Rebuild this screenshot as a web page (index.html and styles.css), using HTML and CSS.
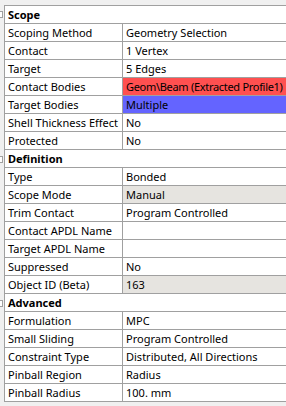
FILE: index.html
```html
<!DOCTYPE html>
<html lang="en">
<head>
    <meta charset="UTF-8">
    <title>Details</title>
    <link rel="stylesheet" href="styles.css">
</head>
<body>
    <div class="grid">
        <div class="row group first">
            <div class="gut"><span class="box"></span></div>
            <div class="cells"><div class="head">Scope</div></div>
        </div>
        <div class="row"><div class="gut"></div><div class="cells"><div class="name">Scoping Method</div><div class="val">Geometry Selection</div></div></div>
        <div class="row"><div class="gut"></div><div class="cells"><div class="name">Contact</div><div class="val">1 Vertex</div></div></div>
        <div class="row"><div class="gut"></div><div class="cells"><div class="name">Target</div><div class="val">5 Edges</div></div></div>
        <div class="row"><div class="gut"></div><div class="cells"><div class="name">Contact Bodies</div><div class="val red">Geom\Beam (Extracted Profile1)</div></div></div>
        <div class="row"><div class="gut"></div><div class="cells"><div class="name">Target Bodies</div><div class="val blue">Multiple</div></div></div>
        <div class="row"><div class="gut"></div><div class="cells"><div class="name">Shell Thickness Effect</div><div class="val">No</div></div></div>
        <div class="row"><div class="gut"></div><div class="cells"><div class="name">Protected</div><div class="val">No</div></div></div>

        <div class="row group">
            <div class="gut"><span class="box"></span></div>
            <div class="cells"><div class="head">Definition</div></div>
        </div>
        <div class="row"><div class="gut"></div><div class="cells"><div class="name">Type</div><div class="val">Bonded</div></div></div>
        <div class="row"><div class="gut"></div><div class="cells"><div class="name">Scope Mode</div><div class="val ro">Manual</div></div></div>
        <div class="row"><div class="gut"></div><div class="cells"><div class="name">Trim Contact</div><div class="val">Program Controlled</div></div></div>
        <div class="row"><div class="gut"></div><div class="cells"><div class="name">Contact APDL Name</div><div class="val"></div></div></div>
        <div class="row"><div class="gut"></div><div class="cells"><div class="name">Target APDL Name</div><div class="val"></div></div></div>
        <div class="row"><div class="gut"></div><div class="cells"><div class="name">Suppressed</div><div class="val">No</div></div></div>
        <div class="row"><div class="gut"></div><div class="cells"><div class="name">Object ID (Beta)</div><div class="val ro">163</div></div></div>

        <div class="row group">
            <div class="gut"><span class="box"></span></div>
            <div class="cells"><div class="head">Advanced</div></div>
        </div>
        <div class="row"><div class="gut"></div><div class="cells"><div class="name">Formulation</div><div class="val">MPC</div></div></div>
        <div class="row"><div class="gut"></div><div class="cells"><div class="name">Small Sliding</div><div class="val">Program Controlled</div></div></div>
        <div class="row"><div class="gut"></div><div class="cells"><div class="name">Constraint Type</div><div class="val">Distributed, All Directions</div></div></div>
        <div class="row"><div class="gut"></div><div class="cells"><div class="name">Pinball Region</div><div class="val">Radius</div></div></div>
        <div class="row"><div class="gut"></div><div class="cells"><div class="name">Pinball Radius</div><div class="val">100. mm</div></div></div>
    </div>
</body>
</html>
```

FILE: styles.css
```css
body {
    margin: 0;
    padding-top: 5px;
    background-color: #f0f0f0;
    font-family: 'Noto Sans', sans-serif;
    font-size: 11px;
    color: #000;
    overflow: hidden;
}

.grid {
    display: flex;
    flex-direction: column;
}

.row {
    display: flex;
    height: 18px;
}

.row.first {
    height: 19px;
}

.gut {
    width: 4px;
    flex: none;
    display: flex;
    justify-content: flex-end;
    align-items: center;
    overflow: hidden;
}

.box {
    flex: none;
    width: 7px;
    height: 7px;
    margin-right: 1px;
    border: 1px solid #a0a0a0;
    background: #fff;
    box-sizing: border-box;
}

.cells {
    flex: 1;
    min-width: 0;
    display: flex;
    background: #fff;
    border-left: 1px solid #a0a0a0;
    border-bottom: 1px solid #a0a0a0;
}

.first .cells {
    border-top: 1px solid #a0a0a0;
}

.head {
    font-weight: 700;
    padding-left: 3px;
    line-height: 17px;
}

.name {
    width: 114px;
    flex: none;
    padding-left: 3px;
    border-right: 1px solid #a0a0a0;
    line-height: 17px;
    white-space: nowrap;
    overflow: hidden;
}

.val {
    flex: 1;
    min-width: 0;
    padding-left: 3px;
    line-height: 17px;
    white-space: nowrap;
    overflow: hidden;
}

/* long body name has to fit in the cell */
.red {
    background: #ff5050;
    letter-spacing: -0.3px;
}

.blue {
    background: #6464ff;
}

.ro {
    background: #e6e4e0;
}
```
